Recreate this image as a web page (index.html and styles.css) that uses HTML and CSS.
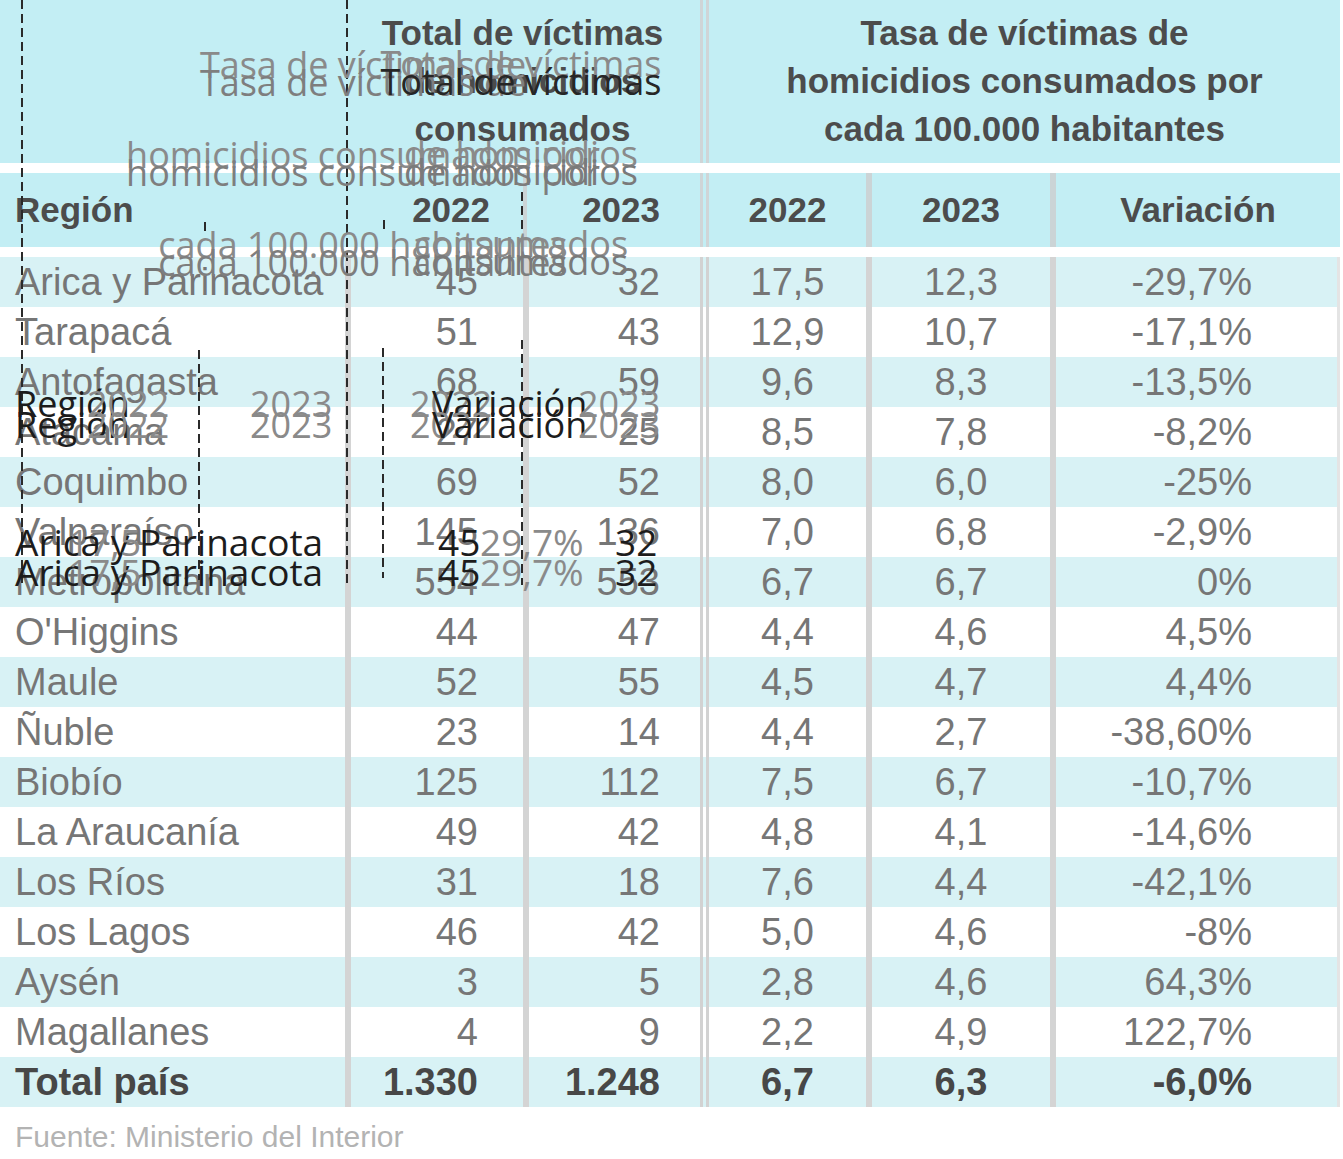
FILE: index.html
```html
<!DOCTYPE html>
<html lang="es">
<head>
<meta charset="utf-8">
<title>Víctimas de homicidios consumados</title>
<link rel="stylesheet" href="styles.css">
</head>
<body>
<div class="page">
  <div class="chart">
    <div class="head1">
      <div class="h1-blank"></div>
      <div class="h1-total">Total de víctimas<br>de homicidios<br>consumados</div>
      <div class="h1-tasa">Tasa de víctimas de<br>homicidios consumados por<br>cada 100.000 habitantes</div>
    </div>
    <div class="grid head2">
      <div class="c1">Región</div>
      <div class="c2">2022</div>
      <div class="c3">2023</div>
      <div class="c4">2022</div>
      <div class="c5">2023</div>
      <div class="c6">Variación</div>
    </div>
    <div class="rows">
      <div class="grid row"><div class="c1">Arica y Parinacota</div><div class="c2">45</div><div class="c3">32</div><div class="c4">17,5</div><div class="c5">12,3</div><div class="c6">-29,7%</div></div>
      <div class="grid row"><div class="c1">Tarapacá</div><div class="c2">51</div><div class="c3">43</div><div class="c4">12,9</div><div class="c5">10,7</div><div class="c6">-17,1%</div></div>
      <div class="grid row"><div class="c1">Antofagasta</div><div class="c2">68</div><div class="c3">59</div><div class="c4">9,6</div><div class="c5">8,3</div><div class="c6">-13,5%</div></div>
      <div class="grid row"><div class="c1">Atacama</div><div class="c2">27</div><div class="c3">25</div><div class="c4">8,5</div><div class="c5">7,8</div><div class="c6">-8,2%</div></div>
      <div class="grid row"><div class="c1">Coquimbo</div><div class="c2">69</div><div class="c3">52</div><div class="c4">8,0</div><div class="c5">6,0</div><div class="c6">-25%</div></div>
      <div class="grid row"><div class="c1">Valparaíso</div><div class="c2">145</div><div class="c3">136</div><div class="c4">7,0</div><div class="c5">6,8</div><div class="c6">-2,9%</div></div>
      <div class="grid row"><div class="c1">Metropolitana</div><div class="c2">554</div><div class="c3">553</div><div class="c4">6,7</div><div class="c5">6,7</div><div class="c6">0%</div></div>
      <div class="grid row"><div class="c1">O'Higgins</div><div class="c2">44</div><div class="c3">47</div><div class="c4">4,4</div><div class="c5">4,6</div><div class="c6">4,5%</div></div>
      <div class="grid row"><div class="c1">Maule</div><div class="c2">52</div><div class="c3">55</div><div class="c4">4,5</div><div class="c5">4,7</div><div class="c6">4,4%</div></div>
      <div class="grid row"><div class="c1">Ñuble</div><div class="c2">23</div><div class="c3">14</div><div class="c4">4,4</div><div class="c5">2,7</div><div class="c6">-38,60%</div></div>
      <div class="grid row"><div class="c1">Biobío</div><div class="c2">125</div><div class="c3">112</div><div class="c4">7,5</div><div class="c5">6,7</div><div class="c6">-10,7%</div></div>
      <div class="grid row"><div class="c1">La Araucanía</div><div class="c2">49</div><div class="c3">42</div><div class="c4">4,8</div><div class="c5">4,1</div><div class="c6">-14,6%</div></div>
      <div class="grid row"><div class="c1">Los Ríos</div><div class="c2">31</div><div class="c3">18</div><div class="c4">7,6</div><div class="c5">4,4</div><div class="c6">-42,1%</div></div>
      <div class="grid row"><div class="c1">Los Lagos</div><div class="c2">46</div><div class="c3">42</div><div class="c4">5,0</div><div class="c5">4,6</div><div class="c6">-8%</div></div>
      <div class="grid row"><div class="c1">Aysén</div><div class="c2">3</div><div class="c3">5</div><div class="c4">2,8</div><div class="c5">4,6</div><div class="c6">64,3%</div></div>
      <div class="grid row"><div class="c1">Magallanes</div><div class="c2">4</div><div class="c3">9</div><div class="c4">2,2</div><div class="c5">4,9</div><div class="c6">122,7%</div></div>
      <div class="grid row total"><div class="c1">Total país</div><div class="c2">1.330</div><div class="c3">1.248</div><div class="c4">6,7</div><div class="c5">6,3</div><div class="c6">-6,0%</div></div>
    </div>
    <div class="source">Fuente: Ministerio del Interior</div>
  </div>

  <div class="overlay" aria-hidden="true">
    <span class="dash d22"></span>
    <span class="dash d347"></span>
    <span class="dash d199"></span>
    <span class="dash d383"></span>
    <span class="dash d522"></span>
    <span class="dash d522s"></span>
    <span class="dash d205s"></span>
    <span class="dash d384s"></span>

    <div class="ovblock tasa tasa-a">Tasa de víctimas de<br>homicidios consumados por<br>cada 100.000 habitantes</div>
    <div class="ovblock tasa tasa-b">Tasa de víctimas de<br>homicidios consumados por<br>cada 100.000 habitantes</div>
    <div class="ovblock tot total-a">Total de víctimas<br>de homicidios<br>consumados</div>
    <div class="ovblock tot total-b"><span class="dark-line">Total de víctimas</span><br>de homicidios<br>consumados</div>

    <div class="ovrow hr-a">
      <span class="dark x15">Región</span><span class="grey x87">2022</span><span class="grey x250">2023</span><span class="grey x410">2022</span><span class="dark x432">Variación</span><span class="grey x578">2023</span>
    </div>
    <div class="ovrow hr-b">
      <span class="dark x15">Región</span><span class="grey x87">2022</span><span class="grey x250">2023</span><span class="grey x410">2022</span><span class="dark x432">Variación</span><span class="grey x578">2023</span>
    </div>
    <div class="ovrow arica ar-a">
      <span class="dark x15">Arica y Parinacota</span><span class="grey x68">17,5</span><span class="dark x438">45</span><span class="grey x480">29,7%</span><span class="dark x615">32</span>
    </div>
    <div class="ovrow arica ar-b">
      <span class="dark x15">Arica y Parinacota</span><span class="grey x68">17,5</span><span class="dark x438">45</span><span class="grey x480">29,7%</span><span class="dark x615">32</span>
    </div>
  </div>
</div>
</body>
</html>
```

FILE: styles.css
```css
html, body {
  margin: 0;
  padding: 0;
  background: #ffffff;
}

.page {
  position: relative;
  width: 1343px;
  min-height: 1159px;
}

.chart {
  width: 1340px;
  font-family: "Liberation Sans", Arial, sans-serif;
  color: #767676;
}

/* ---------- header block ---------- */
.head1 {
  display: grid;
  grid-template-columns: 345px 355px 640px;
  height: 163px;
  background: #c3eef4;
  margin-bottom: 10px;
}

.h1-total,
.h1-tasa {
  box-sizing: border-box;
  padding-top: 9px;
  font-size: 35px;
  font-weight: bold;
  line-height: 48px;
  text-align: center;
  color: #4c4c4c;
}

.h1-tasa {
  border-left: 9px double #cfd5d7;
}

.grid {
  display: grid;
  grid-template-columns: 345px 178px 177px 166px 184px 290px;
}

.grid > div {
  box-sizing: border-box;
  white-space: nowrap;
}

.head2 {
  height: 74px;
  background: #c3eef4;
  margin-bottom: 10px;
  align-items: stretch;
  font-size: 35px;
  font-weight: bold;
  line-height: 74px;
  color: #4c4c4c;
}

.head2 .c1 { padding-left: 15px; }
.head2 .c2 { text-align: right; padding-right: 33px; }
.head2 .c3 { text-align: right; padding-right: 40px; border-left: 4px solid #cbd4d6; }
.head2 .c4 { text-align: center; border-left: 9px double #cfd5d7; }
.head2 .c5 { text-align: center; border-left: 6px solid #cbd4d6; }
.head2 .c6 { text-align: center; border-left: 6px solid #cbd4d6; }

/* ---------- body rows ---------- */
.row {
  height: 50px;
  font-size: 38px;
  line-height: 50px;
  background: #ffffff;
}

.row:nth-child(odd) {
  background: #d8f2f5;
}

.row .c1 { padding-left: 15px; }
.row .c2 { text-align: right; padding-right: 45px; border-left: 6px solid #d4d4d4; }
.row .c3 { text-align: right; padding-right: 40px; border-left: 6px solid #d4d4d4; }
.row .c4 { text-align: center; border-left: 9px double #d2d2d2; }
.row .c5 { text-align: center; border-left: 6px solid #d4d4d4; }
.row .c6 { text-align: right; padding-right: 85px; border-left: 6px solid #d4d4d4; border-right: 3px solid #e4e4e4; }

.row.total {
  font-weight: bold;
  color: #474747;
}

.source {
  margin-top: 10px;
  padding-left: 15px;
  font-size: 30px;
  line-height: 40px;
  color: #b3b3b3;
}

/* ---------- overlaid layer ---------- */
.overlay {
  position: absolute;
  left: 0;
  top: 0;
  width: 1343px;
  height: 1159px;
  pointer-events: none;
  font-family: "Open Sans", "Noto Sans", sans-serif;
  font-size: 36px;
}

.dash {
  position: absolute;
  width: 2px;
  background: repeating-linear-gradient(to bottom, #2a2a2a 0 9px, transparent 9px 14px);
}

.d22  { left: 21px;  top: 0;     height: 585px; }
.d347 { left: 346px; top: 0;     height: 585px; }
.d199 { left: 198px; top: 350px; height: 230px; }
.d383 { left: 382px; top: 348px; height: 230px; }
.d522 { left: 521px; top: 340px; height: 245px; }
.d522s { left: 521px; top: 192px; height: 40px; }
.d205s { left: 204px; top: 222px; height: 9px; }
.d384s { left: 383px; top: 220px; height: 9px; }

.ovblock {
  position: absolute;
  line-height: 90px;
  text-align: center;
  white-space: nowrap;
  color: #8a8a8a;
}

.ovblock.tasa {
  left: 18px;
  width: 690px;
  font-size: 36px;
}

.ovblock.tot {
  left: 345px;
  width: 352px;
  font-size: 36px;
}

.tasa-a  { top: 20px; }
.tasa-b  { top: 38px; color: #7e7e7e; }
.total-a { top: 19px; }
.total-b { top: 37px; color: #7a7a7a; }

.dark-line { color: #262626; }

.ovrow {
  position: absolute;
  left: 0;
  width: 700px;
  height: 44px;
  line-height: 44px;
}

.ovrow.arica {
  font-size: 37px;
}

.ovrow span {
  position: absolute;
  top: 0;
  white-space: nowrap;
}

.hr-a { top: 382px; }
.hr-b { top: 403px; }
.ar-a { top: 520px; }
.ar-b { top: 550px; }

.dark { color: #1c1c1c; }
.grey { color: #8a8a8a; }

.x15  { left: 15px; }
.x68  { left: 68px; }
.x87  { left: 87px; }
.x250 { left: 250px; }
.x410 { left: 410px; }
.x432 { left: 432px; }
.x438 { left: 438px; }
.x480 { left: 480px; }
.x578 { left: 578px; }
.x615 { left: 615px; }
```
